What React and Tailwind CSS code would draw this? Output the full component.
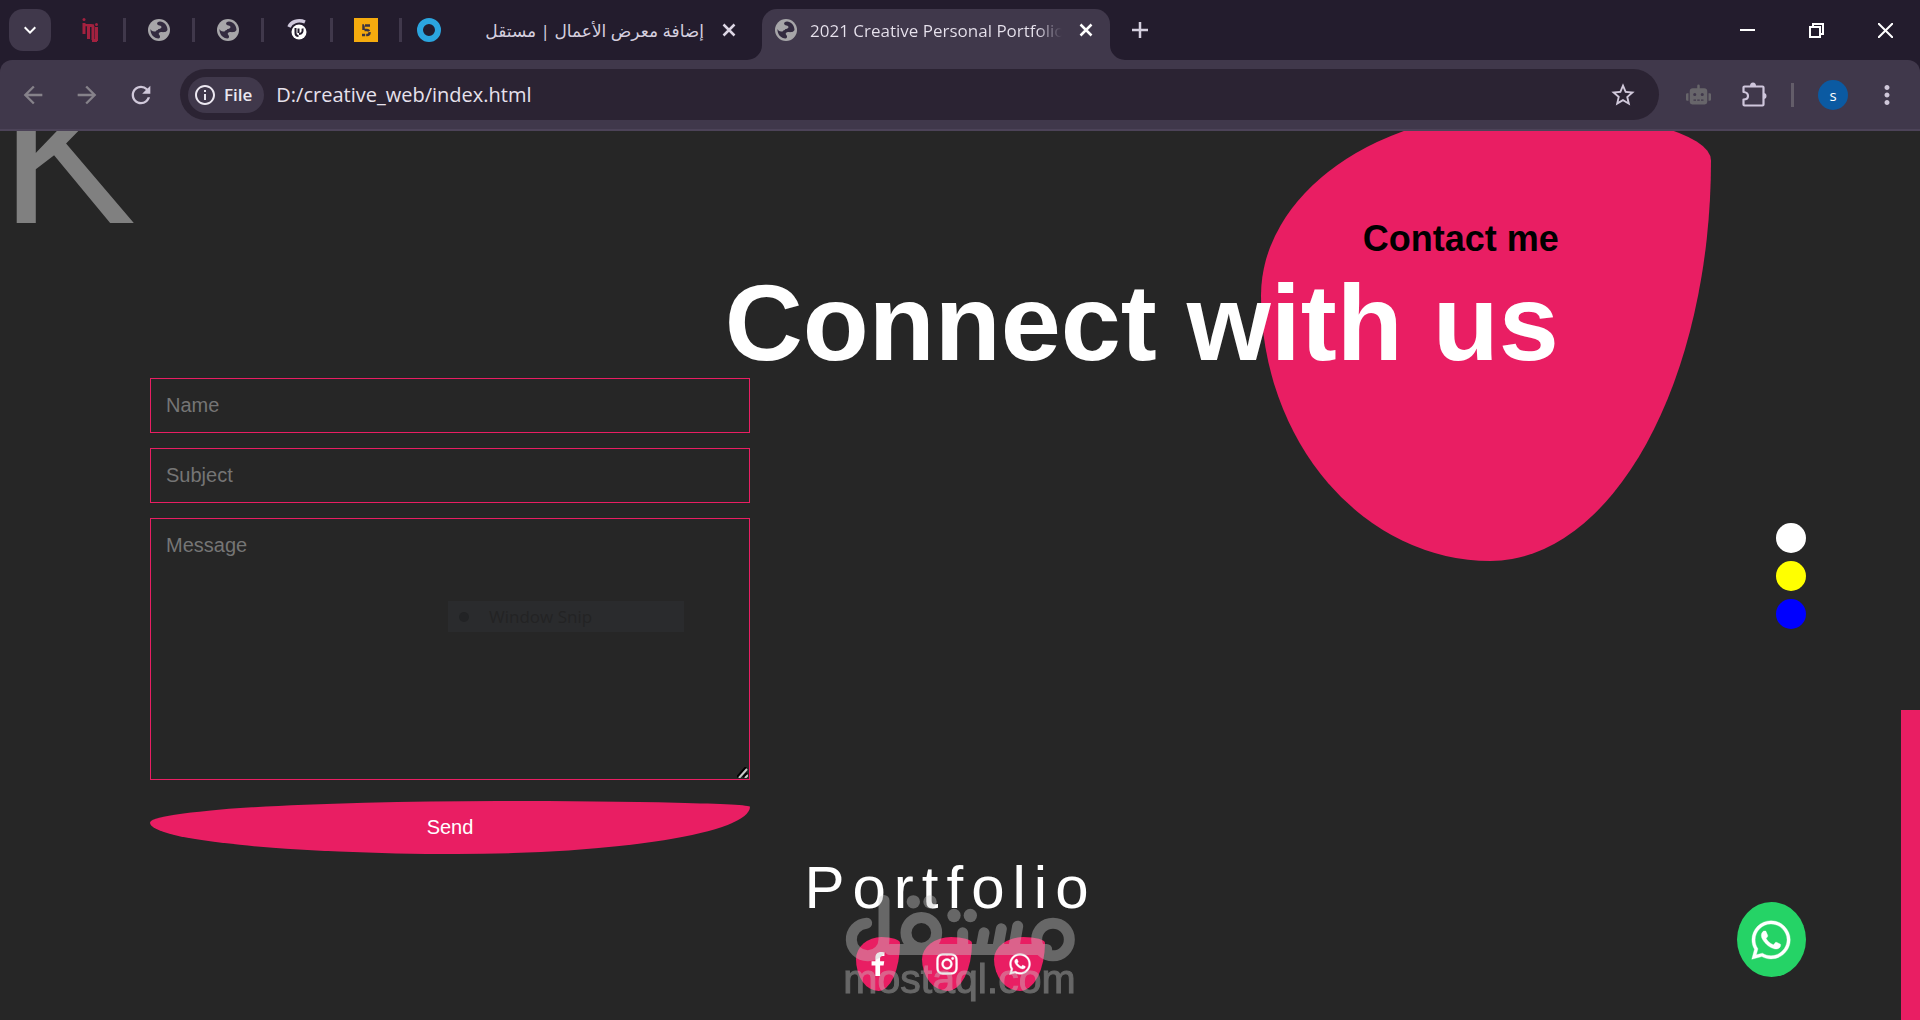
import React, { useState } from "react";
import { FaFacebookF, FaInstagram, FaWhatsapp, FaRobot } from "react-icons/fa";
import {
  MdArrowBack,
  MdArrowForward,
  MdInfoOutline,
  MdKeyboardArrowDown,
  MdMoreVert,
  MdRefresh,
  MdStarBorder,
} from "react-icons/md";

const ItiIcon = () => (
  <svg width="16" height="24" viewBox="0 0 16 24" fill="none" stroke="#a3213f" strokeWidth="3">
    <path d="M2 5v11M3 6.500l9 1.500M6.500 21V7.500M11 22V8M14.500 9v14M10 22.500h5" />
    <circle cx="2" cy="1.500" r="1.500" fill="#a3213f" stroke="none" />
    <circle cx="14.500" cy="6.500" r="1.500" fill="#a3213f" stroke="none" />
  </svg>
);

const GlobeIcon = () => (
  <svg width="22" height="22" viewBox="0 0 22 22" className="shrink-0">
    <circle cx="11" cy="11" r="11" fill="#a7a6a9" />
    <path
      d="M12 2.500C8 3 8.500 6 11.500 6.500S14 9.500 11 10s-2 2.500-4.500 2.500S3 11 2.500 10C2 15 6 19.500 10.500 19.500c2.500-.5 1.500-3 .5-4s.5-3 3-2.500 4 .5 5.500-2C19.500 6 16 3 12 2.500z"
      fill="#332b40"
    />
    <path d="M5.500 5.500c2 1.500 2 4 4.500 4.500M13 16.500c2.500 0 2-2.500 4.500-2.500" fill="none" stroke="#a7a6a9" strokeWidth="2.500" />
  </svg>
);

const EyeIcon = () => (
  <svg width="20" height="22" viewBox="0 0 20 22">
    <path d="M2 8C4 3 11 0 18 3" fill="none" stroke="#cfc8dc" strokeWidth="3.500" />
    <circle cx="12" cy="13" r="7.500" fill="#fff" />
    <path d="M8.500 9v5a3 3 0 0 0 3 3M11.500 9.500v4.500M12 15c3 0 4-2 3.500-5.500" fill="none" stroke="#231c2d" strokeWidth="2" />
  </svg>
);

const FiveIcon = () => (
  <svg width="24" height="24" viewBox="0 0 24 24">
    <rect width="24" height="24" fill="#f5ab0e" />
    <path d="M16 7.500H9.500V12H13a2.500 2.500 0 0 1 0 5H8" fill="none" stroke="#3a3442" strokeWidth="2.500" strokeDasharray="5 1" />
  </svg>
);

const RingIcon = () => (
  <svg width="24" height="24" viewBox="0 0 24 24">
    <circle cx="12" cy="12" r="9" fill="none" stroke="#2ba5df" strokeWidth="6" />
  </svg>
);

const CloseIcon = () => (
  <svg width="20" height="20" viewBox="0 0 20 20" fill="none" stroke="currentColor" strokeWidth="2.500">
    <path d="M4.500 4.500l11 11M15.500 4.500l-11 11" />
  </svg>
);

const PlusIcon = () => (
  <svg width="24" height="24" viewBox="0 0 24 24" fill="none" stroke="currentColor" strokeWidth="2.500">
    <path d="M12 4v16M4 12h16" />
  </svg>
);

const PuzzleIcon = () => (
  <svg width="25" height="25" viewBox="0 0 25 25">
    <path
      d="M2.500 4.500h18a1 1 0 0 1 1 1v17a1 1 0 0 1-1 1h-18a1 1 0 0 1-1-1v-5c3 0 4.500-1.500 4.500-3.500S4.500 10 1.500 10V5.500a1 1 0 0 1 1-1z"
      fill="none"
      stroke="#cfc6dc"
      strokeWidth="2.200"
      strokeLinejoin="round"
    />
    <path d="M8 4a3 3.500 0 0 1 6 0zM21.500 11a3 3 0 0 1 0 6z" fill="#cfc6dc" />
  </svg>
);

// rounded foot on either side of the active tab
const TabFoot = ({ className }) => (
  <svg className={className} width="15" height="15" viewBox="0 0 15 15">
    <path d="M15 0v15H0A15 15 0 0 0 15 0z" fill="#40384b" />
  </svg>
);

const pinnedTabs = [
  { name: "ITI", icon: <ItiIcon /> },
  { name: "Page", icon: <GlobeIcon /> },
  { name: "Page 2", icon: <GlobeIcon /> },
  { name: "Eye", icon: <EyeIcon /> },
  { name: "Five", icon: <FiveIcon /> },
];

const BrowserTabs = () => {
  return (
    <div className="flex h-[60px] items-center bg-[#231c2d] text-[#d5cfdf]">
      <button aria-label="Search tabs" className="ml-[9px] mr-[6px] flex size-[42px] shrink-0 items-center justify-center rounded-[14px] bg-[#40384b] text-white">
        <MdKeyboardArrowDown size={24} />
      </button>

      {pinnedTabs.map((tab) => (
        <div key={tab.name} className="flex w-[69px] shrink-0 items-center">
          <button aria-label={tab.name} className="flex flex-1 items-center justify-center">
            {tab.icon}
          </button>
          <span className="h-6 w-[3px] bg-[#40384b]" />
        </div>
      ))}

      <div className="flex w-[360px] shrink-0 items-center pl-[15px] pr-[23px]">
        <RingIcon />
        <button dir="rtl" className="min-w-0 flex-1 whitespace-nowrap pr-[15px] pt-[2px] text-right text-[17px]">
          إضافة معرض الأعمال | مستقل
        </button>
        <button aria-label="Close tab" className="text-[#dcd6e4]">
          <CloseIcon />
        </button>
      </div>

      <div className="relative flex h-[51px] w-[348px] shrink-0 items-center self-end rounded-t-[15px] bg-[#40384b] pb-[9px] pl-[13px] pr-[14px]">
        <TabFoot className="absolute -left-[15px] bottom-0" />
        <TabFoot className="absolute -right-[15px] bottom-0 -scale-x-100" />
        <GlobeIcon />
        <button className="ml-[13px] mr-[14px] flex-1 overflow-hidden whitespace-nowrap bg-gradient-to-r from-[#e8e3ee] from-90% to-[#40384b] bg-clip-text pt-[2px] text-left font-['Open_Sans',sans-serif] text-[17px] text-transparent">
          2021 Creative Personal Portfolio
        </button>
        <button aria-label="Close tab" className="text-white">
          <CloseIcon />
        </button>
      </div>

      <button aria-label="New tab" className="ml-[18px]">
        <PlusIcon />
      </button>

      <div className="ml-auto flex text-white">
        <button aria-label="Minimize" className="flex h-[60px] w-[69px] items-center justify-center">
          <svg width="15" height="15" viewBox="0 0 15 15" fill="none" stroke="currentColor" strokeWidth="2">
            <path d="M0 7h15" />
          </svg>
        </button>
        <button aria-label="Restore" className="flex h-[60px] w-[69px] items-center justify-center">
          <svg width="15" height="15" viewBox="0 0 15 15" fill="none" stroke="currentColor" strokeWidth="2">
            <path d="M1 4h10v10H1zM4 4V1h10v10h-3" />
          </svg>
        </button>
        <button aria-label="Close window" className="flex h-[60px] w-[69px] items-center justify-center">
          <svg width="15" height="15" viewBox="0 0 15 15" fill="none" stroke="currentColor" strokeWidth="2">
            <path d="M0 0l15 15M15 0L0 15" />
          </svg>
        </button>
      </div>
    </div>
  );
};

const BrowserToolbar = () => {
  const [url, setUrl] = useState("D:/creative_web/index.html");

  return (
    <div className="bg-[#231c2d] font-['Open_Sans',sans-serif]">
      <div className="flex h-[71px] items-center rounded-t-[12px] border-b-2 border-[#4c4358] bg-[#40384b] pl-[19px] pr-[18px] text-[#d0c8da]">
        <div className="flex items-center gap-[26px]">
          <button aria-label="Back" className="text-[#86828a]">
            <MdArrowBack size={28} />
          </button>
          <button aria-label="Forward" className="text-[#86828a]">
            <MdArrowForward size={28} />
          </button>
          <button aria-label="Reload">
            <MdRefresh size={28} />
          </button>
        </div>

        <div className="ml-[25px] flex h-[51px] flex-1 items-center rounded-full bg-[#2b2333] pl-2 pr-[22px]">
          <button className="flex h-9 items-center gap-[7px] rounded-full bg-[#40384b] pl-[5px] pr-3 text-[17px] font-semibold text-[#ece8f1]">
            <MdInfoOutline size={24} />
            File
          </button>
          <input
            aria-label="Address"
            className="ml-3 min-w-0 flex-1 bg-transparent text-[20px] text-[#e6e1ec] outline-none"
            value={url}
            onChange={(e) => setUrl(e.target.value)}
          />
          <button aria-label="Bookmark">
            <MdStarBorder size={28} />
          </button>
        </div>

        <div className="ml-[27px] flex items-center">
          <button aria-label="Robot extension" className="text-[#67656a]">
            <FaRobot size={25} />
          </button>
          <button aria-label="Extensions" className="ml-[31px]">
            <PuzzleIcon />
          </button>
          <span className="ml-6 h-6 w-[3px] bg-[#635d69]" />
          <button aria-label="Profile" className="ml-6 size-[30px] rounded-full bg-[#0b5aa2] text-[15px] leading-[30px] text-white">
            s
          </button>
          <button aria-label="Menu" className="ml-6">
            <MdMoreVert size={30} />
          </button>
        </div>
      </div>
    </div>
  );
};

const socials = [
  { name: "Facebook", icon: <FaFacebookF size={24} />, width: "w-[44px]" },
  { name: "Instagram", icon: <FaInstagram size={24} strokeWidth={8} />, width: "w-[50px]" },
  { name: "WhatsApp", icon: <FaWhatsapp size={24} strokeWidth={8} />, width: "w-[51px]" },
];

const colors = [
  { name: "White", bg: "bg-white" },
  { name: "Yellow", bg: "bg-[#ffff00]" },
  { name: "Blue", bg: "bg-[#0000ff]" },
];

const Watermark = () => (
  <div className="pointer-events-none absolute inset-x-0 -top-[42px] flex flex-col items-center pl-[18px] opacity-40">
    <svg width="230" height="67" viewBox="165 135 690 200" fill="none" stroke="#c8c8c8" strokeWidth="33" strokeLinecap="round">
      <circle cx="789" cy="268" r="49" />
      <circle cx="394" cy="248" r="46" />
      <path d="M230 219A49 49 0 1 0 282 268V151" />
      <path d="M300 298H770M518 248V290M582 248L574 290M634 236L624 290M683 228L672 290" />
      <g fill="#c8c8c8" stroke="none">
        <circle cx="370" cy="155" r="20" />
        <circle cx="420" cy="155" r="20" />
        <circle cx="492" cy="196" r="20" />
        <circle cx="541" cy="196" r="20" />
      </g>
    </svg>
    <span className="text-[41px] leading-[34px] text-[#c8c8c8] [-webkit-text-stroke:1px_#c8c8c8]">mostaql.com</span>
  </div>
);

const ContactForm = () => {
  const field = "w-full border border-[#e91e63] bg-transparent p-[15px] text-[20px] leading-[23px] text-white outline-none placeholder:text-[#757575]";

  return (
    <form className="ml-[150px] flex w-[600px] flex-col gap-[15px]" onSubmit={(e) => e.preventDefault()}>
      <input type="text" aria-label="Name" placeholder="Name" className={field} />
      <input type="text" aria-label="Subject" placeholder="Subject" className={field} />
      <div className="relative flex">
        <textarea aria-label="Message" placeholder="Message" className={`${field} h-[262px] resize-none`} />
        <svg className="absolute bottom-[2px] right-[2px]" width="11" height="11" viewBox="0 0 11 11">
          <path d="M0 10L9 0M6 10l4-4" stroke="#000" strokeWidth="2" />
          <path d="M2 11l8-9M8 11l3-3" stroke="#c9c9c9" strokeWidth="2" />
        </svg>
        {/* snipping tool tooltip */}
        <div className="pointer-events-none absolute left-[298px] top-[83px] flex h-[31px] w-[236px] items-center bg-[#2a2b2d] pl-[11px] font-['Open_Sans',sans-serif] text-[17px] text-[#232324]">
          <span className="mr-5 size-[10px] rounded-full bg-[#222325]" />
          Window Snip
        </div>
      </div>
      <button className="mt-[6px] rounded-[58%_42%_49%_51%/41%_11%_89%_59%] bg-[#e91e63] p-[15px] text-[20px] leading-[23px] text-white">
        Send
      </button>
    </form>
  );
};

const ContactPage = () => {
  return (
    <main className="relative min-w-0 flex-1 overflow-hidden bg-[#262626] font-['Liberation_Sans',Arial,sans-serif]">
      <div className="absolute -top-[20px] right-[10%] size-[450px] rounded-[58%_42%_49%_51%/41%_11%_89%_59%] bg-[#e91e63]" />
      <span className="absolute left-0 top-0 text-[204px] leading-[42px] text-[#808080]">K</span>

      <div className="relative mr-[18%] pt-[86px] text-right font-bold">
        <h3 className="text-[36px] leading-[44px] text-black">Contact me</h3>
        <h2 className="mt-[7px] text-[108px] leading-[110px] text-white">Connect with us</h2>
      </div>

      <ContactForm />

      <footer className="text-center">
        <h4 className="text-[60px] leading-[68px] tracking-[8px] text-white">Portfolio</h4>
        <div className="relative mt-[15px] flex justify-center gap-[22px]">
          {socials.map((item) => (
            <a
              key={item.name}
              href="#"
              aria-label={item.name}
              className={`flex h-[54px] items-center justify-center rounded-[58%_42%_49%_51%/41%_11%_89%_59%] bg-[#e91e63] text-white ${item.width}`}
            >
              {item.icon}
            </a>
          ))}
          <Watermark />
        </div>
      </footer>

      <div className="absolute right-[5%] top-[392px] flex flex-col gap-2">
        {colors.map((color) => (
          <button key={color.name} aria-label={color.name} className={`size-[30px] rounded-full ${color.bg}`} />
        ))}
      </div>

      <a href="#" aria-label="WhatsApp chat" className="absolute bottom-[43px] right-[5%] flex h-[75px] w-[69px] items-center justify-center rounded-[50%] bg-[#25d366] text-white">
        <FaWhatsapp size={44} strokeWidth={4} />
      </a>
    </main>
  );
};

const App = () => {
  return (
    <div className="flex h-screen flex-col overflow-hidden font-['Noto_Sans','DejaVu_Sans',sans-serif]">
      <BrowserTabs />
      <BrowserToolbar />
      <div className="flex min-h-0 flex-1">
        <ContactPage />
        {/* page scrollbar */}
        <div className="flex w-[19px] flex-col justify-end bg-[#262626]">
          <div className="h-[310px] bg-[#e91e63]" />
        </div>
      </div>
    </div>
  );
};

export default App;
